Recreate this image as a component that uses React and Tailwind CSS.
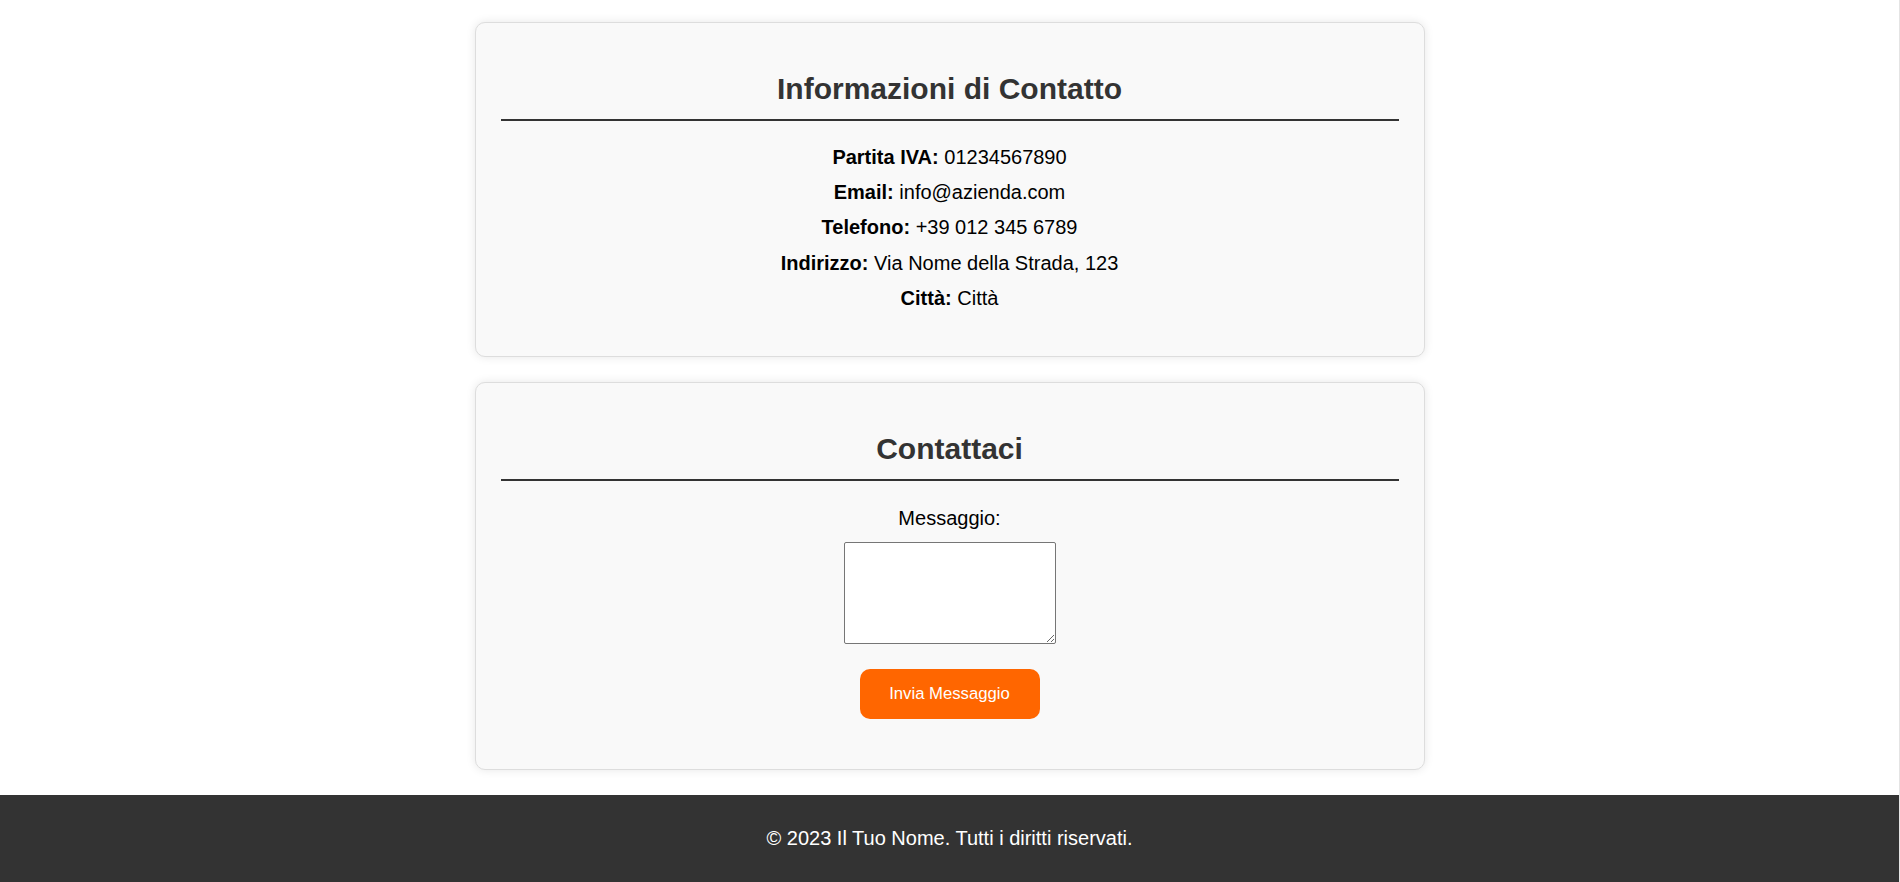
import { useState } from "react";

const info = [
  { label: "Partita IVA:", value: "01234567890" },
  { label: "Email:", value: "info@azienda.com" },
  { label: "Telefono:", value: "+39 012 345 6789" },
  { label: "Indirizzo:", value: "Via Nome della Strada, 123" },
  { label: "Città:", value: "Città" },
];

function Card({ title, children }) {
  return (
    <section className="w-[950px] rounded-[10px] border border-[#dddddd] bg-[#f9f9f9] px-[25px] pt-[25px] pb-[25px] shadow-[0_0_10px_rgba(0,0,0,0.1)]">
      <h2 className="mt-[24px] border-b-2 border-[#333333] pb-[12px] text-center text-[30px] font-bold leading-[34.5px] text-[#333333]">
        {title}
      </h2>
      {children}
    </section>
  );
}

export default function App() {
  const [message, setMessage] = useState("");

  return (
    <div className="flex min-h-screen flex-col border-r border-[#e4e4e4] bg-white font-['Liberation_Sans',Arial,sans-serif] text-black">
      <main className="flex flex-col items-center gap-[25px] pt-[22px] pb-[25px]">
        {/* Contact info */}
        <Card title="Informazioni di Contatto">
          <div className="mt-[25px] mb-[21px] flex flex-col gap-[12.4px] text-center text-[20px] leading-[23px]">
            {info.map((row) => (
              <p key={row.label}>
                <strong className="font-bold">{row.label}</strong> {row.value}
              </p>
            ))}
          </div>
        </Card>

        {/* Contact form */}
        <Card title="Contattaci">
          <form
            onSubmit={(e) => e.preventDefault()}
            className="mt-[26px] mb-[25px] flex flex-col items-center"
          >
            <label htmlFor="messaggio" className="text-[20px] leading-[23px]">
              Messaggio:
            </label>
            <textarea
              id="messaggio"
              value={message}
              onChange={(e) => setMessage(e.target.value)}
              className="mt-[12px] h-[102px] w-[212px] rounded-[2px] border border-[#767676] bg-white p-[2px] text-[16px]"
            />
            <button
              type="submit"
              className="mt-[25px] h-[50px] w-[180px] rounded-[10px] bg-[#ff6600] text-[16.7px] text-white hover:bg-[#e65c00]"
            >
              Invia Messaggio
            </button>
          </form>
        </Card>
      </main>

      <footer className="flex-1 bg-[#333333] pt-[32px] pb-[30px] text-center text-[20px] leading-[23px] text-white">
        <p>© 2023 Il Tuo Nome. Tutti i diritti riservati.</p>
      </footer>
    </div>
  );
}
